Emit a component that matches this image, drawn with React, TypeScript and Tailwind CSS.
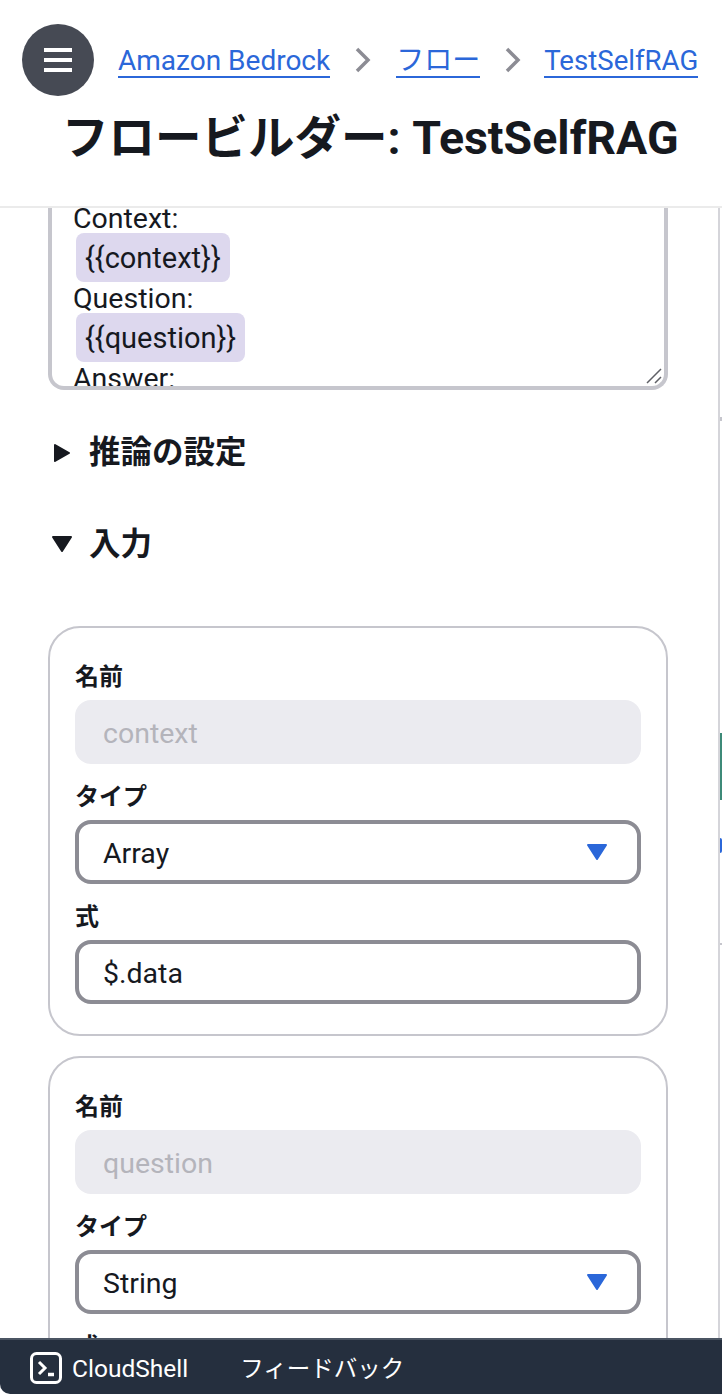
import React from 'react';

const Chevron = () => (
  <svg className="w-[16px] h-[26px] text-[#8c8c94] shrink-0" viewBox="0 0 16 26" fill="none" stroke="currentColor" strokeWidth={3.5}>
    <path d="M2 2 L13 13 L2 24" />
  </svg>
);

const Crumb = ({ children, className = 'text-[28px]' }: { children: React.ReactNode; className?: string }) => (
  <a className={`${className} text-[#2b67d9] leading-[30px] pt-[4px] border-b-2 border-[#2b67d9] whitespace-nowrap`}>{children}</a>
);

const Label = ({ children }: { children: React.ReactNode }) => (
  <div className="text-[24px] leading-[28px] pt-[3px] mb-[9px] font-bold text-[#16191f]">{children}</div>
);

const Disabled = ({ value }: { value: string }) => (
  <div className="h-[64px] pt-[4px] rounded-[16px] bg-[#ebebf0] px-[28px] flex items-center text-[28.5px] text-[#b4b4bb]">{value}</div>
);

const Select = ({ value }: { value: string }) => (
  <div className="h-[64px] rounded-[16px] border-[4px] border-[#8c8c94] px-[24px] flex items-center justify-between text-[28.5px] text-[#16191f]">
    <span className="pt-[4px]">{value}</span>
    <svg className="w-[22px] h-[18px] text-[#2b67d9] mr-[5px]" viewBox="0 0 22 18" fill="currentColor" stroke="currentColor" strokeWidth={2} strokeLinejoin="round">
      <path d="M2 2 L20 2 L11 16 Z" />
    </svg>
  </div>
);

const Input = ({ value }: { value: string }) => (
  <div className="h-[64px] rounded-[16px] border-[4px] border-[#8c8c94] px-[24px] pt-[4px] flex items-center text-[28.5px] text-[#16191f]">{value}</div>
);

const Pill = ({ children }: { children: React.ReactNode }) => (
  <div className="h-[50px] flex items-center">
    <span className="ml-[3px] h-[49px] pt-[4px] px-[9px] rounded-[8px] bg-[#ddd8ee] text-[29px] flex items-center text-[#16191f]">{children}</span>
  </div>
);

export default function App() {
  return (
    <div className="w-[722px] h-[1394px] relative overflow-hidden bg-white flex flex-col text-[#16191f] [font-family:Roboto,'Noto_Sans_CJK_JP',sans-serif]">
      <header className="h-[208px] shrink-0 border-b-2 border-[#ebebeb] bg-white px-[22px] pt-[24px]">
        <div className="flex items-center">
          <button className="w-[72px] h-[72px] shrink-0 rounded-full bg-[#464a54] flex flex-col items-center justify-center gap-[6px]">
            <span className="block w-[28px] h-[4px] bg-white"></span>
            <span className="block w-[28px] h-[4px] bg-white"></span>
            <span className="block w-[28px] h-[4px] bg-white"></span>
          </button>
          <nav className="ml-[24px] flex items-center gap-[25px]">
            <Crumb>Amazon Bedrock</Crumb>
            <Chevron />
            <Crumb>フロー</Crumb>
            <Chevron />
            <Crumb className="text-[27.6px] -ml-[2px]">TestSelfRAG</Crumb>
          </nav>
        </div>
        <h1 className="mt-[10px] ml-[40px] text-[46.5px] leading-[64px] font-bold whitespace-nowrap">フロービルダー: TestSelfRAG</h1>
      </header>

      <main className="flex-1 min-h-0 overflow-hidden relative">
        <div className="w-[620px] ml-[48px]">
          <div className="h-[184px] -mt-[2px] border-x-[4px] border-b-[4px] border-[#c6c6cd] rounded-b-[16px] pl-[21px] relative overflow-hidden">
            <div className="text-[28.5px] leading-[30px] h-[26px] -mt-[2px]">Context:</div>
            <div className="mt-[2px]"><Pill>{'{{context}}'}</Pill></div>
            <div className="text-[28.5px] leading-[30px] pt-[2px] h-[30px]">Question:</div>
            <Pill>{'{{question}}'}</Pill>
            <div className="text-[28.5px] leading-[30px] pt-[2px]">Answer:</div>
            <svg className="absolute right-[2px] bottom-[2px] w-[16px] h-[16px] text-[#5f6066]" viewBox="0 0 16 16" stroke="currentColor" strokeWidth={1.5}>
              <path d="M1 15 L15 1 M9 15 L15 9" />
            </svg>
          </div>

          <div className="mt-[41px] flex items-center h-[44px] text-[31.5px] font-bold">
            <svg className="w-[18px] h-[20px] ml-[5px] mr-[18px]" viewBox="0 0 18 20" fill="currentColor" stroke="currentColor" strokeWidth={2} strokeLinejoin="round">
              <path d="M2 2 L16 10 L2 18 Z" />
            </svg>
            推論の設定
          </div>
          <div className="mt-[48px] flex items-center h-[44px] text-[31.5px] font-bold">
            <svg className="w-[22px] h-[18px] ml-[3px] mr-[16px] -mt-[3px]" viewBox="0 0 22 18" fill="currentColor" stroke="currentColor" strokeWidth={2} strokeLinejoin="round">
              <path d="M2 2 L20 2 L11 16 Z" />
            </svg>
            入力
          </div>

          <div className="mt-[59px] border-2 border-[#c6c6cd] rounded-[32px] px-[25px] pt-[32px] h-[410px]">
            <Label>名前</Label>
            <Disabled value="context" />
            <div className="mt-[16px]"><Label>タイプ</Label></div>
            <Select value="Array" />
            <div className="mt-[16px]"><Label>式</Label></div>
            <Input value="$.data" />
          </div>

          <div className="mt-[20px] border-2 border-[#c6c6cd] rounded-[32px] px-[25px] pt-[32px] h-[408px]">
            <Label>名前</Label>
            <Disabled value="question" />
            <div className="mt-[16px]"><Label>タイプ</Label></div>
            <Select value="String" />
            <div className="mt-[16px]"><Label>式</Label></div>
          </div>
        </div>
        <div className="absolute left-[718px] top-0 bottom-0 w-[2px] bg-[#d5d5da]"></div>
        <div className="absolute left-[720px] top-[525px] h-[67px] w-[2px] bg-[#3d8a78]"></div>
        <div className="absolute left-[720px] top-[630px] h-[15px] w-[2px] bg-[#2b67d9] rounded-r-full"></div>
        <div className="absolute left-[720px] top-[209px] h-[4px] w-[2px] bg-[#c6c6cd]"></div>
        <div className="absolute left-[720px] top-[735px] h-[2px] w-[2px] bg-[#c6c6cd]"></div>
      </main>

      <footer className="h-[56px] shrink-0 bg-[#252f3e] border-t-2 border-[#4b5563] rounded-bl-[10px] flex items-center pl-[30px] text-white">
        <svg className="w-[32px] h-[32px] mt-[2px]" viewBox="0 0 32 32" fill="none" stroke="white" strokeWidth={3}>
          <rect x="1.5" y="1.5" width="29" height="29" rx="5" />
          <path d="M9 10 L15 16 L9 22" />
          <path d="M18 22.5 L24 22.5" strokeWidth={3.5} />
        </svg>
        <span className="ml-[10px] pt-[4px] text-[24.5px]">CloudShell</span>
        <span className="ml-[52px] pt-[6px] text-[23.5px]">フィードバック</span>
      </footer>
    </div>
  );
}
